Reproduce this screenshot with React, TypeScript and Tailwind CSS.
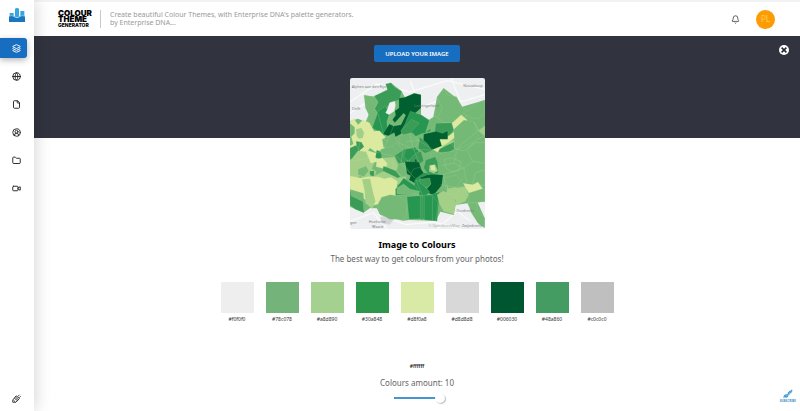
import { useState } from "react";
import { Bell, CircleUserRound, File, Folder, Globe, Layers, Video } from "lucide-react";

const navItems = [
  { label: "Themes", icon: Layers },
  { label: "Web", icon: Globe },
  { label: "Documents", icon: File },
  { label: "Account", icon: CircleUserRound },
  { label: "Projects", icon: Folder },
  { label: "Videos", icon: Video },
];

const swatches = [
  { name: "#f0f0f0", fill: "bg-[#eeeeee]" },
  { name: "#78c078", fill: "bg-[#74b37a]" },
  { name: "#a8d890", fill: "bg-[#a5d190]" },
  { name: "#30a848", fill: "bg-[#2a974a]" },
  { name: "#d8f0a8", fill: "bg-[#d9e9a6]" },
  { name: "#d8d8d8", fill: "bg-[#d8d8d8]" },
  { name: "#006030", fill: "bg-[#005630]" },
  { name: "#48a860", fill: "bg-[#449c63]" },
  { name: "#c0c0c0", fill: "bg-[#bfbfbf]" },
];

const M = "#3a9c57";
const G = "#279650";
const D = "#00602f";
const L = "#a3d086";
const Y = "#dcea9f";
const S = "#74b975";

/* Regions of the choropleth, painted in order over the land. */
const regions: [string, string][] = [
  [S, "42,52 72,56 84,68 74,94 84,108 66,150 50,134 56,110 46,90"],
  [M, "72,54 112,36 106,18 122,14 132,26 154,40 148,66 122,72 108,92 84,108 74,92 84,72"],
  [G, "84,100 106,84 118,110 110,130 112,160 96,180 84,160 66,150"],
  [D, "146,60 164,58 192,46 212,50 212,90 192,108 176,136 152,168 130,180 98,168 116,140 136,112 134,98 146,90"],
  ["#f0f1f0", "118,74 134,70 136,82 132,100 116,110 106,104 112,94"],
  [S, "116,114 134,134 160,106 166,112 152,140 130,144 118,138"],
  [G, "180,100 212,110 246,134 240,160 212,168 190,178 152,160 164,138"],
  [M, "152,158 184,124 206,136 178,166 196,186 166,190"],
  [S, "150,172 186,164 208,188 190,214 160,216 144,202"],
  [Y, "0,132 12,122 24,140 38,126 58,134 72,160 88,158 118,190 100,214 76,222 60,210 44,230 18,220 0,226"],
  [S, "0,136 14,148 14,166 4,176 10,198 0,204"],
  [L, "18,154 34,150 42,164 38,180 26,182 20,174"],
  [M, "18,190 34,192 42,206 28,218 20,206"],
  [M, "0,210 18,202 30,216 20,238 0,244"],
  [S, "96,184 132,164 140,192 112,214 100,208"],
  [L, "0,250 24,218 52,222 74,250 62,280 22,298 0,306"],
  [Y, "46,216 80,226 86,250 62,256"],
  [G, "80,216 98,226 92,250 76,238"],
  [S, "92,214 124,204 146,226 128,248 96,242"],
  [L, "102,240 134,238 146,270 126,284 98,268"],
  [Y, "80,242 98,240 112,258 104,272 78,266"],
  [M, "132,234 164,212 182,228 166,256 146,258"],
  [S, "144,258 172,252 180,284 158,298 138,282"],
  [M, "100,264 136,278 150,296 132,310 94,294"],
  [L, "26,282 52,266 78,280 72,300 38,304"],
  [S, "24,274 48,264 56,278 42,296 24,290"],
  [M, "58,280 72,278 72,296 60,292"],
  [L, "62,300 100,280 142,300 168,296 160,314 128,322 96,316"],
  [M, "180,228 212,220 220,248 200,264 176,256"],
  [G, "166,214 194,208 206,220 188,234 174,250 160,236"],
  [D, "178,256 190,256 196,240 204,258 196,276 180,274"],
  [D, "164,250 206,252 214,276 194,300 170,288"],
  [D, "188,274 208,268 224,290 214,316 194,316 176,306"],
  [G, "196,302 222,284 256,288 246,322 206,330"],
  [D, "206,300 242,286 278,290 274,322 250,352 222,340 240,320"],
  [G, "194,306 212,312 238,342 222,358 190,344"],
  [M, "206,304 238,300 242,318 230,330 210,316"],
  [Y, "0,294 34,300 54,296 84,296 102,302 122,298 142,310 138,340 136,358 118,370 96,376 70,382 38,360 0,348"],
  [L, "36,304 60,302 68,340 76,370 66,392 46,374 44,340"],
  [M, "0,338 38,358 42,404 16,394 0,382"],
  [S, "0,334 40,346 42,372 4,354"],
  [S, "82,382 94,358 120,350 146,354 170,374 168,412 158,424 118,424 88,406"],
  [G, "136,334 160,300 200,328 202,348 136,352"],
  [S, "140,330 160,318 180,334 208,340 204,352 140,348"],
  [G, "170,356 240,350 268,342 260,430 214,422 176,424"],
  [M, "210,354 218,354 218,426 210,424"],
  [G, "222,352 246,352 262,374 256,428 222,426"],
  [S, "226,162 238,124 254,114 260,58 280,30 292,52 318,56 334,86 362,104 336,122 304,134 258,142"],
  [M, "256,136 306,134 312,154 292,178 252,166"],
  [S, "338,106 382,74 402,66 402,110 382,122 364,120"],
  [Y, "304,136 332,110 350,126 328,152 310,156"],
  [Y, "256,188 298,172 318,156 320,174 306,184 282,204 272,228 250,216"],
  [D, "220,168 258,160 276,166 292,158 292,184 268,184 274,204 238,218 218,198"],
  [M, "208,176 232,198 244,218 224,226 204,212"],
  [L, "272,206 308,186 312,206 290,216"],
  [M, "268,212 310,192 312,212 284,230 260,228"],
  [S, "310,154 340,126 370,132 396,174 370,194 340,218 312,210"],
  [L, "384,158 402,144 402,174"],
  [S, "240,226 310,220 346,202 402,174 402,322 366,318 318,328 286,330 278,290 244,288"],
  [M, "226,246 254,236 262,252 264,286 234,290 220,270"],
  [L, "238,262 254,260 262,278 250,286 236,280"],
  [Y, "240,264 252,260 256,278 242,276"],
  [L, "292,322 318,330 346,326 350,354 318,366 288,352"],
  [L, "260,350 278,340 308,352 316,376 310,408 280,400 266,374"],
  [S, "280,300 316,292 334,306 316,328 294,332"],
  [Y, "338,316 366,320 382,312 396,332 380,352 354,344"],
  [S, "352,346 402,330 402,370 378,374 354,376"],
  [L, "316,346 342,326 354,350 344,370 316,382"],
  [S, "352,376 378,374 380,398 402,420 402,450 382,436 362,404"],
];

const roads = [
  "M100 214L112 190L130 144M76 222L144 238L180 284M0 250L60 240L92 252M24 218L32 184L60 162M140 192L190 214L250 216M166 190L208 188",
  "M254 114L276 132L298 134M260 58L276 90L262 118M292 184L316 214L340 218L370 194L402 194M276 262L310 256L318 220M310 256L340 270L366 250L402 256",
  "M278 290L310 280L340 270L348 314M366 250L350 218L370 194M366 318L374 284L402 276M282 244L304 240L330 250L326 276L306 282L286 270Z",
  "M38 126L60 162L112 190M158 216L152 258L194 300M128 248L130 270L158 298M196 304L218 356M96 240L78 266M46 374L70 382M84 108L100 168",
  "M246 356L246 428M188 344L210 352M270 320L316 328M320 210L382 158L370 132M178 166L190 214L206 252M190 178L250 216L274 228",
];

function MapPicture() {
  return (
    <svg
      viewBox="0 0 403 453"
      role="img"
      aria-label="Uploaded map"
      preserveAspectRatio="none"
      className="block h-[151px] w-[135px] rounded-xs"
    >
      <rect width="403" height="453" fill="#edeff0" />
      <g fill="none" stroke="#fafafa" strokeWidth="4">
        <path d="M0 72L80 18L180 42L290 8L403 34M0 105L54 70M180 8L210 88L260 70M302 0L330 72L403 50" />
        <path d="M0 430L70 404L110 453M80 408L166 440L250 432L330 453M260 453L320 400L360 430" />
      </g>
      <path d="M90 418L116 408L132 424L118 440L96 436Z" fill="#d4d6d8" />
      <path
        d="M0 130L24 122L46 132L56 110L42 52L72 56L112 34L122 14L154 40L164 58L192 46L212 50L212 110L246 131L260 56L280 31L318 60L335 86L403 66L403 371L380 371L402 420L402 450L350 376L315 381L310 411L270 401L256 428L176 426L158 428L90 411L80 391L60 390L40 404L0 386Z"
        fill={S}
      />
      <g stroke="#b9dcae" strokeWidth="1" strokeLinejoin="round" strokeOpacity="0.55">
        {regions.map(([fill, points], i) => (
          <polygon key={i} points={points} fill={fill} />
        ))}
      </g>
      <g fill="none" stroke="#c9e5bb" strokeWidth="1" strokeOpacity="0.6">
        {roads.map((d) => (
          <path key={d} d={d} />
        ))}
      </g>
      <g fill="#777c80" fontFamily="Noto Sans, sans-serif" fontSize="11">
        <text x="5" y="30">Alphen aan den Rijn</text>
        <text x="6" y="96">Delft</text>
        <text x="192" y="87">Lansingerland</text>
        <text x="338" y="27">Nieuwkoop</text>
        <text x="0" y="438">gen</text>
        <text x="56" y="436">Hoeksche</text>
        <text x="66" y="451">Waard</text>
        <text x="318" y="403">Dordrecht</text>
        <text x="234" y="448" fill="#a8acaf">© OpenStreetMap</text>
        <text x="334" y="448">Zwijndrecht</text>
      </g>
    </svg>
  );
}

function BrandMark() {
  return (
    <svg viewBox="0 0 48 42" className="h-[14px] w-4" aria-hidden="true">
      <path d="M2 15h12v9l4 2V4q0-4 6-4t6 4v22l4-2V9h12v19H2Z" fill="#35a7de" />
      <path d="M0 25q8-5 16 1t16 0 16-1v17H0Z" fill="#1976bf" />
      <path d="M0 25q8-5 16 1t16 0 16-1" fill="none" stroke="#a7daf2" strokeWidth="2" />
    </svg>
  );
}

function Sidebar() {
  return (
    <aside className="z-10 flex w-[34px] shrink-0 flex-col bg-white shadow-[2px_0_16px_rgba(0,0,0,0.16)]">
      <a href="#home" aria-label="Home" className="flex h-[38px] items-start pt-2 pl-[9px]">
        <BrandMark />
      </a>
      <nav className="flex flex-col gap-2">
        {navItems.map(({ label, icon: Icon }, i) => (
          <a
            key={label}
            href={"#" + label.toLowerCase()}
            aria-label={label}
            className={
              i === 0
                ? "flex h-5 w-[27px] items-center rounded-r-[3px] bg-[#176ec0] pl-3 text-white shadow-[0_2px_6px_rgba(0,0,0,0.3)]"
                : "flex h-5 w-[27px] items-center pl-3 text-[#252525]"
            }
          >
            <Icon size={9} strokeWidth={2.5} />
          </a>
        ))}
      </nav>
      <a href="#palette" aria-label="Palette" className="mt-auto mb-2 ml-3 text-[#333]">
        <svg viewBox="0 0 24 24" className="size-[9px]" fill="none" stroke="currentColor" strokeWidth="2.5" aria-hidden="true">
          <path d="M2 16L11 5l9 7-10 10H2ZM6 11l9 7M9 8l8 7M4 17l5 4M15 7l5-5M19 10l4-4" />
        </svg>
      </a>
    </aside>
  );
}

function Header() {
  return (
    <header className="flex h-9 items-center border-t-2 border-[#f3f3f3] bg-white pr-[25px] pl-6">
      <div className="w-[43px] border-r border-[#c8c8c8] font-[Inter,sans-serif] font-black text-black">
        <p className="text-[8px] leading-[6px]">COLOUR</p>
        <p className="text-[8px] leading-[6px]">THEME</p>
        <p className="text-[5px] leading-[6px] font-extrabold">GENERATOR</p>
      </div>
      <p className="ml-[9px] text-[7px] leading-2 text-[#999]">
        Create beautiful Colour Themes, with Enterprise DNA&apos;s palette generators.
        <br />
        by Enterprise DNA...
      </p>
      <button type="button" aria-label="Notifications" className="ml-auto text-[#333]">
        <Bell size={9} strokeWidth={2} />
      </button>
      <button
        type="button"
        aria-label="Profile"
        className="ml-4 size-[19px] rounded-full bg-[#fd9b04] text-[8px] leading-none text-[#ffd04d]"
      >
        PL
      </button>
    </header>
  );
}

export default function App() {
  const [amount, setAmount] = useState(10);

  return (
    <div className="flex min-h-screen bg-white font-['Noto_Sans',sans-serif]">
      <Sidebar />
      <div className="flex min-w-0 flex-1 flex-col">
        <Header />
        <main className="relative flex flex-1 flex-col items-center">
          <div className="absolute inset-x-0 top-0 h-[102px] bg-[#31333f]" />
          <button
            type="button"
            aria-label="Close"
            className="absolute top-[9px] right-[11px] flex size-[10px] items-center justify-center rounded-full bg-white text-[#242631]"
          >
            <svg viewBox="0 0 10 10" className="size-[6px]" stroke="currentColor" strokeWidth="2.5" aria-hidden="true">
              <path d="M1 1L9 9M9 1L1 9" />
            </svg>
          </button>
          <div className="relative flex flex-col items-center">
            <button
              type="button"
              className="mt-[9px] mb-4 h-[17px] w-[86px] rounded-xs bg-[#176ec0] text-[6px] leading-none font-semibold text-white"
            >
              UPLOAD YOUR IMAGE
            </button>
            <MapPicture />
            <h1 className="mt-[10px] text-[9px] leading-3 font-bold text-black">Image to Colours</h1>
            <p className="mt-[2px] text-[8px] leading-3 text-[#666]">
              The best way to get colours from your photos!
            </p>
            <ul className="mt-[17px] flex gap-3">
              {swatches.map(({ name, fill }) => (
                <li key={name} className="w-[33px] text-center text-[5px] leading-[6px] text-[#333]">
                  <div className={"mb-[3px] h-[31px] " + fill} />
                  {name}
                </li>
              ))}
            </ul>
            <p className="mt-[41px] text-[5px] leading-[6px] font-semibold text-[#222]">#ffffff</p>
            <label htmlFor="amount" className="mt-2 text-[8px] leading-3 text-[#666]">
              Colours amount: {amount}
            </label>
            <input
              id="amount"
              type="range"
              min="2"
              max="10"
              value={amount}
              onChange={(e) => setAmount(Number(e.target.value))}
              className="mt-1 ml-[5px] h-[10px] w-[51px] appearance-none bg-transparent [&::-webkit-slider-runnable-track]:h-[2px] [&::-webkit-slider-runnable-track]:bg-[#4596d0] [&::-webkit-slider-thumb]:-mt-1 [&::-webkit-slider-thumb]:size-[10px] [&::-webkit-slider-thumb]:appearance-none [&::-webkit-slider-thumb]:rounded-full [&::-webkit-slider-thumb]:bg-white [&::-webkit-slider-thumb]:shadow-[1px_1px_1px_rgba(0,0,0,0.25)]"
            />
          </div>
          <a
            href="#subscribe"
            className="absolute right-1 bottom-2 flex flex-col items-center text-[3px] leading-1 font-bold text-[#3f91cb]"
          >
            <svg viewBox="0 0 24 24" className="size-[10px]" fill="none" stroke="#4b9cd3" strokeWidth="3" aria-hidden="true">
              <path d="M2 21C4 8 12 18 13 12S18 7 22 2M2 17c9 6 10-1 10-5s5-5 10-8M5 15l5 5M12 8l5 5M15 5l5 5" />
            </svg>
            SUBSCRIBE
          </a>
        </main>
      </div>
    </div>
  );
}
